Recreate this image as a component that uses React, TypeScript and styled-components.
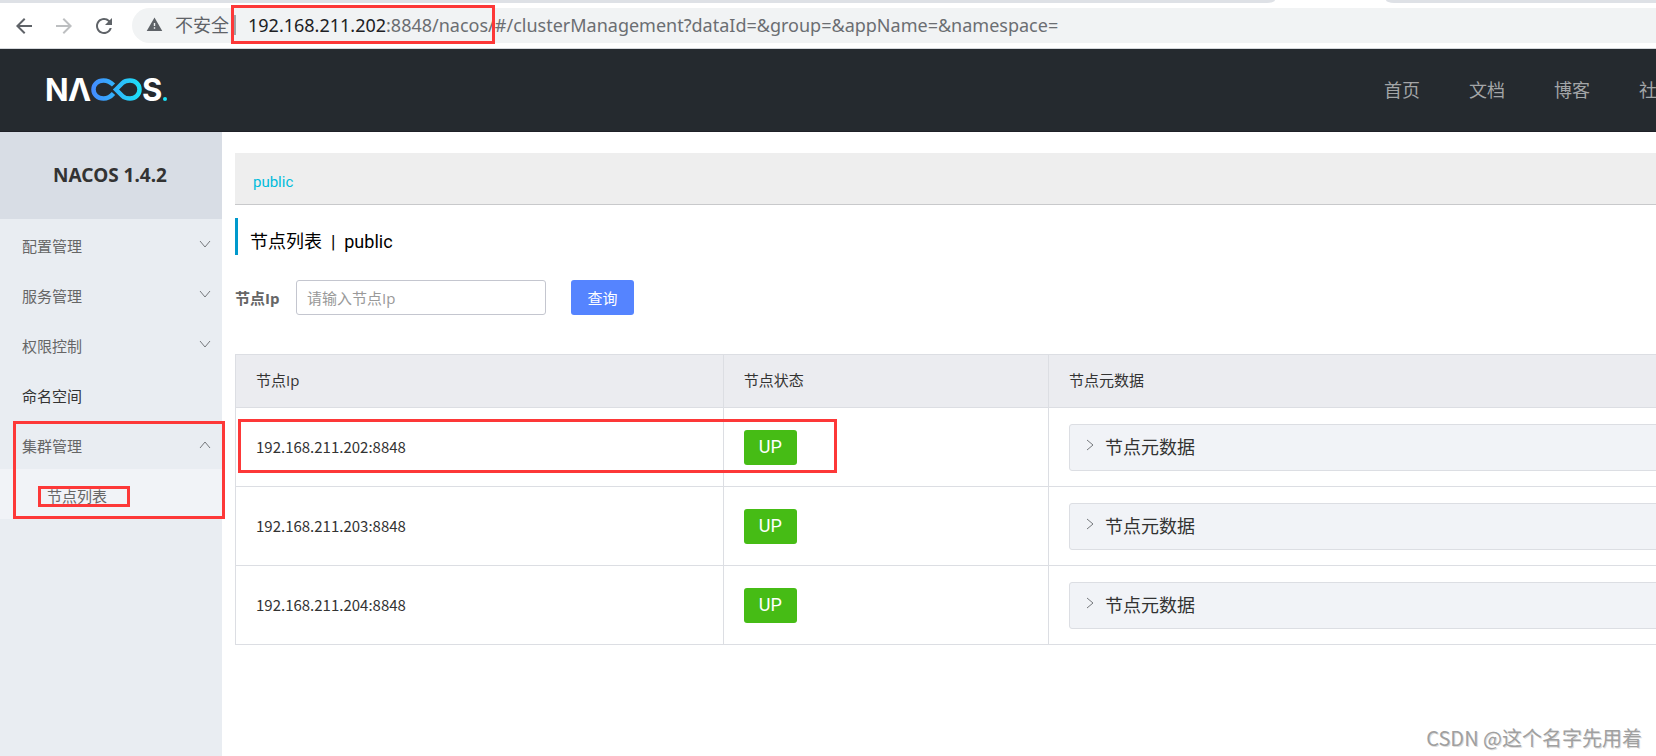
import React from "react";
import styled, { createGlobalStyle } from "styled-components";
import { MdArrowBack, MdArrowForward, MdRefresh, MdWarning } from "react-icons/md";

const GlobalStyle = createGlobalStyle`
  *, *::before, *::after { box-sizing: border-box; }
  body {
    margin: 0;
    overflow: hidden;
    background: #fff;
    color: #333;
    font-family: "Open Sans", "Noto Sans CJK SC", sans-serif;
    font-size: 15px;
    line-height: 20px;
  }
  button, input { font: inherit; }
  a { color: inherit; text-decoration: none; }
`;

const Page = styled.div`
  position: relative;
  display: flex;
  flex-direction: column;
  min-height: 100vh;
  overflow: hidden;
`;

/* Red annotation frame laid over the content it points at. */
const Mark = styled.span<{ $x: number; $y: number; $w: number; $h: number }>`
  position: absolute;
  z-index: 2;
  left: ${(p) => p.$x}px;
  top: ${(p) => p.$y}px;
  width: ${(p) => p.$w}px;
  height: ${(p) => p.$h}px;
  border: 3px solid #fd3838;
  pointer-events: none;
`;

const TabStrip = styled.div`
  display: flex;
  height: 3px;
  background: #fff;
`;

const TabsBefore = styled.div`
  flex: 0 1 1275px;
  background: #dee1e6;
  border-bottom-right-radius: 8px 3px;
`;

const TabsAfter = styled.div`
  flex: 1 0 0;
  margin-left: 111px;
  background: #dee1e6;
  border-bottom-left-radius: 8px 3px;
`;

const Toolbar = styled.div`
  display: flex;
  align-items: center;
  gap: 16px;
  height: 46px;
  padding-left: 12px;
  border-bottom: 1px solid #d5d8dc;
  background: #fff;
`;

const ToolButton = styled.button<{ $dim?: boolean }>`
  display: flex;
  padding: 0;
  border: 0;
  background: none;
  color: ${(p) => (p.$dim ? "#bdbfc1" : "#5f6368")};
`;

const AddressBar = styled.div`
  position: relative;
  display: flex;
  flex: 1;
  align-items: center;
  height: 35px;
  padding: 0 0 2px 14px;
  border-radius: 18px 0 0 18px;
  background: #f1f3f4;
  color: #5f6368;
  font-size: 18px;
  line-height: 24px;
  white-space: nowrap;
`;

const Insecure = styled.span`
  display: flex;
  align-items: center;
  gap: 12px;
  padding-right: 5px;
`;

const Divider = styled.span`
  width: 2px;
  height: 20px;
  margin-right: 12px;
  background: #9fa2a5;
`;

const Url = styled.span`
  font-family: "Noto Sans", sans-serif;
  color: #6b6e72;
`;

const Host = styled.span`
  color: #202124;
`;

const Header = styled.header`
  display: flex;
  align-items: center;
  justify-content: space-between;
  height: 83px;
  padding: 0 0 0 44px;
  border-bottom: 1px solid #1e2027;
  background: #252a2f;
`;

const Nav = styled.nav`
  display: flex;
  gap: 49px;
  margin-right: -19px;
  color: #a3a5a7;
  font-size: 18px;
`;

const Body = styled.div`
  display: flex;
  flex: 1;
`;

const Sidebar = styled.aside`
  position: relative;
  z-index: 1;
  flex: 0 0 222px;
  background: #e9edf2;
`;

const Version = styled.h1`
  height: 87px;
  margin: 0;
  padding-right: 2px;
  background: #d8dde5;
  font-family: "Noto Sans", sans-serif;
  font-size: 19px;
  font-weight: 700;
  line-height: 87px;
  text-align: center;
`;

const Group = styled.div`
  position: relative;
`;

const MenuItem = styled.button<{ $strong?: boolean }>`
  display: flex;
  align-items: center;
  justify-content: space-between;
  width: 100%;
  height: 50px;
  padding: 4px 11px 0 22px;
  border: 0;
  background: none;
  color: ${(p) => (p.$strong ? "#333" : "#666")};
  text-align: left;
`;

const SubItem = styled.a`
  display: flex;
  align-items: center;
  height: 50px;
  padding: 4px 0 0 47px;
  background: #f1f3f7;
  color: #666;
`;

const Main = styled.main`
  flex: 1;
  min-width: 0;
  padding: 21px 0 0 13px;
`;

const Namespace = styled.div`
  display: flex;
  align-items: center;
  height: 52px;
  padding: 6px 18px 0;
  border-bottom: 1px solid #c8c9cb;
  background: #eee;
  color: #00bcdc;
  font-family: Roboto, sans-serif;
`;

const Title = styled.h2`
  height: 37px;
  margin: 13px 0 25px;
  padding: 5px 0 0 12px;
  border-left: 3px solid #09c;
  color: #000;
  font-family: Roboto, "Noto Sans CJK SC", sans-serif;
  font-size: 18px;
  font-weight: 400;
  line-height: 37px;
  white-space: pre;
`;

const Search = styled.form`
  display: flex;
  align-items: center;
  margin-bottom: 39px;
`;

const Label = styled.label`
  width: 61px;
  color: #666;
  font-weight: 700;
`;

const TextInput = styled.input`
  width: 250px;
  height: 35px;
  margin-right: 25px;
  padding: 0 10px;
  border: 1px solid #c4c6cf;
  border-radius: 3px;
  &::placeholder { color: #999; }
`;

const Primary = styled.button`
  width: 63px;
  height: 35px;
  padding: 0;
  border: 0;
  border-radius: 3px;
  background: #5584ff;
  color: #fff;
`;

const TableBox = styled.div`
  position: relative;
  overflow: hidden;
`;

const Table = styled.table`
  width: 100%;
  min-width: 1627px;
  border-collapse: collapse;
  table-layout: fixed;
`;

const Th = styled.th<{ $share: number }>`
  width: ${(p) => p.$share}%;
  height: 53px;
  padding: 0 20px 2px;
  border: 1px solid #dcdee3;
  background: #ebecf0;
  font-weight: 400;
  text-align: left;
`;

const Td = styled.td`
  height: 79px;
  padding: 0 20px;
  border: 1px solid #dcdee3;
`;

const Address = styled.span`
  font-family: "Noto Sans CJK SC", sans-serif;
`;

const Status = styled.button`
  display: block;
  width: 53px;
  height: 35px;
  padding: 0;
  border: 0;
  border-radius: 3px;
  background: #46bc15;
  color: #fff;
  font-family: Roboto, sans-serif;
  font-size: 18px;
`;

const Collapse = styled.button`
  display: flex;
  align-items: center;
  gap: 9px;
  width: 100%;
  height: 47px;
  padding: 0 14px;
  border: 1px solid #dcdee3;
  border-radius: 3px;
  background: #f1f3f7;
  color: #333;
  font-size: 18px;
`;

const Watermark = styled.div`
  position: absolute;
  right: 14px;
  bottom: 4px;
  color: #a0a0a0;
  font-family: "Noto Sans CJK SC", sans-serif;
  font-size: 20px;
  line-height: 28px;
  text-shadow: 1px 1px 0 #ddd;
`;

type Direction = "up" | "down" | "right";

const chevrons: Record<Direction, string> = {
  down: "M1 3 L6 9 L11 3",
  up: "M1 10 L6 4 L11 10",
  right: "M3 1 L9 6 L3 11",
};

function Chevron({ to }: { to: Direction }) {
  return (
    <svg width="12" height="16" viewBox="0 0 12 16" fill="none" stroke="#75787c" aria-hidden="true">
      <path d={chevrons[to]} />
    </svg>
  );
}

function Logo() {
  return (
    <svg width="126" height="52" viewBox="-2 -12 126 52" role="img" aria-label="NACOS.">
      <defs>
        <linearGradient id="loop" gradientUnits="userSpaceOnUse" x1="46" y1="0" x2="96" y2="0">
          <stop offset="0" stopColor="#448bff" />
          <stop offset="1" stopColor="#1be3f7" />
        </linearGradient>
      </defs>
      <g fill="#fff" fontFamily="Inter, sans-serif" fontSize="31" fontWeight="700">
        <text x="-1" y="25">N</text>
        <text x="22" y="25">Λ</text>
        <text x="96" y="25">S</text>
      </g>
      <g fill="none" stroke="url(#loop)" strokeWidth="4.500">
        <path d="M67.500 9 C64 5.500 61.500 4.500 57.500 4.500 C51.500 4.500 47.500 8.500 47.500 13.500 C47.500 18.500 51.500 22.500 57.500 22.500 C61.500 22.500 64 21.500 67.500 17.500" />
        <path d="M70 13.500 L76.500 7 C78.500 5 80.500 4.500 84 4.500 C89.500 4.500 93.500 8.500 93.500 13.500 C93.500 18.500 89.500 22.500 84 22.500 C80.500 22.500 78.500 22 76.500 20 Z" />
      </g>
      <circle cx="119" cy="23" r="2" fill="#1be3f7" />
    </svg>
  );
}

const navItems = ["首页", "文档", "博客", "社区"];

const menu: { label: string; strong?: boolean }[] = [
  { label: "配置管理" },
  { label: "服务管理" },
  { label: "权限控制" },
  { label: "命名空间", strong: true },
];

const nodes = ["192.168.211.202:8848", "192.168.211.203:8848", "192.168.211.204:8848"];

export default function App() {
  return (
    <Page>
      <GlobalStyle />
      <TabStrip>
        <TabsBefore />
        <TabsAfter />
      </TabStrip>
      <Toolbar>
        <ToolButton aria-label="后退"><MdArrowBack size={24} /></ToolButton>
        <ToolButton aria-label="前进" $dim><MdArrowForward size={24} /></ToolButton>
        <ToolButton aria-label="刷新"><MdRefresh size={24} /></ToolButton>
        <AddressBar>
          <Insecure><MdWarning size={17} />不安全</Insecure>
          <Divider />
          <Url><Host>192.168.211.202</Host>:8848/nacos/#/clusterManagement?dataId=&amp;group=&amp;appName=&amp;namespace=</Url>
          <Mark $x={99} $y={-3} $w={264} $h={39} />
        </AddressBar>
      </Toolbar>
      <Header>
        <Logo />
        <Nav>
          {navItems.map((item) => <a href="#" key={item}>{item}</a>)}
        </Nav>
      </Header>
      <Body>
        <Sidebar>
          <Version>NACOS 1.4.2</Version>
          {menu.map((item) => (
            <MenuItem key={item.label} $strong={item.strong}>
              {item.label}
              {!item.strong && <Chevron to="down" />}
            </MenuItem>
          ))}
          <Group>
            <MenuItem aria-expanded="true">集群管理<Chevron to="up" /></MenuItem>
            <SubItem href="#">节点列表</SubItem>
            <Mark $x={13} $y={2} $w={212} $h={98} />
            <Mark $x={38} $y={67} $w={92} $h={21} />
          </Group>
        </Sidebar>
        <Main>
          <Namespace><a href="#">public</a></Namespace>
          <Title>{"节点列表  |  public"}</Title>
          <Search onSubmit={(e) => e.preventDefault()}>
            <Label htmlFor="node-ip">节点Ip</Label>
            <TextInput id="node-ip" placeholder="请输入节点Ip" />
            <Primary type="submit">查询</Primary>
          </Search>
          <TableBox>
            <Table>
              <thead>
                <tr>
                  <Th $share={30}>节点Ip</Th>
                  <Th $share={20}>节点状态</Th>
                  <Th $share={50}>节点元数据</Th>
                </tr>
              </thead>
              <tbody>
                {nodes.map((node) => (
                  <tr key={node}>
                    <Td><Address>{node}</Address></Td>
                    <Td><Status>UP</Status></Td>
                    <Td>
                      <Collapse aria-expanded="false"><Chevron to="right" />节点元数据</Collapse>
                    </Td>
                  </tr>
                ))}
              </tbody>
            </Table>
            <Mark $x={3} $y={65} $w={599} $h={54} />
          </TableBox>
        </Main>
      </Body>
      <Watermark>CSDN @这个名字先用着</Watermark>
    </Page>
  );
}
